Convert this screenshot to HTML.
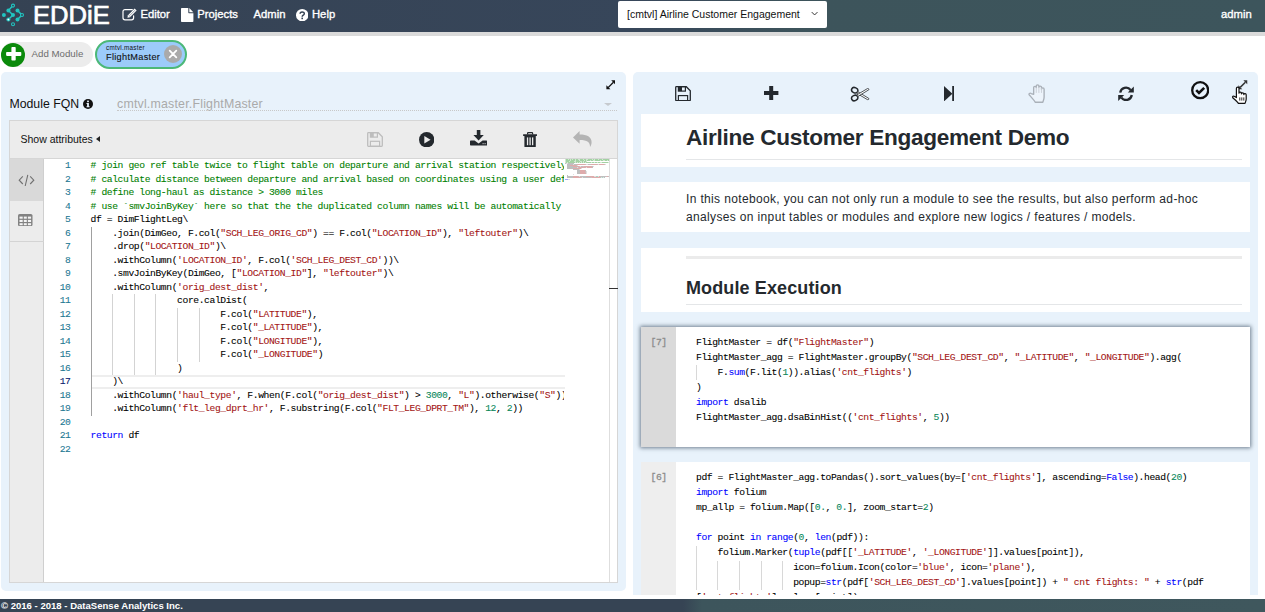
<!DOCTYPE html>
<html lang="en">
<head>
<meta charset="utf-8">
<title>EDDiE</title>
<style>
*{box-sizing:border-box;margin:0;padding:0}
html,body{width:1265px;height:612px;overflow:hidden;background:#fff;font-family:"Liberation Sans",sans-serif;color:#111}
div,span,svg{position:absolute}
span{position:static}
#nav{left:0;top:0;width:1265px;height:32px;background:linear-gradient(90deg,#354253 0%,#37465a 50%,#3d545b 64%,#3d555c 100%);box-shadow:0 4px 0 #dadada}
#nav .brand{left:33px;top:-0.3px;font-size:25.6px;line-height:30px;color:#fff;-webkit-text-stroke:0.7px #fff}
#nav .item{top:0;height:30px;line-height:29px;font-size:11.25px;color:#fff;white-space:nowrap;-webkit-text-stroke:0.35px #fff}
#sel{left:618px;top:1px;width:209px;height:27px;background:#fff;border-radius:2px;font-size:10.5px;line-height:27px;padding-left:9px;color:#111;white-space:nowrap}
#foot{left:0;top:599px;width:1265px;height:13px;background:linear-gradient(90deg,#364454 0%,#364454 54%,#3d555c 55.5%,#3f575d 100%);color:#fff;font-size:9.55px;font-weight:bold;line-height:14px;white-space:nowrap;padding-left:1px}
.panel{background:#e8f2fb;border-radius:5px}
.ln,.cl,.rl{font-family:"Liberation Mono",monospace;font-size:9.7px;white-space:pre;color:#000;height:13.5px;line-height:13.5px;-webkit-text-stroke:0.08px;letter-spacing:-0.416px}
.ln{left:44px;width:26.5px;text-align:right;color:#237893}
.cl{left:90.6px;letter-spacing:-0.4085px}
.rl{left:696px;height:15px;line-height:15px}
.c{color:#008000}.s{color:#a31515}.n{color:#09885a}.k{color:#0000ff}
.ig{width:1px;background:#d3d3d3}
#lclip{left:44px;top:159px;width:520px;height:423px;overflow:hidden}
.cell{left:641px;width:609px;background:#fff}
</style>
</head>
<body>
<div id="nav">
  <div class="brand">EDDiE</div>
  <div class="item" style="left:140.4px">Editor</div>
  <div class="item" style="left:197.3px">Projects</div>
  <div class="item" style="left:253.6px">Admin</div>
  <div class="item" style="left:312px">Help</div>
  <div class="item" style="left:1221px">admin</div>
  <div id="sel">[cmtvl] Airline Customer Engagement</div>
</div>

<!-- module chips -->
<div style="left:1px;top:42px;width:91.5px;height:25px;border-radius:12.5px;background:#ececec;font-size:9.7px;line-height:23.6px;color:#6c6c6c;padding-left:30.6px;white-space:nowrap">Add Module</div>
<div style="left:1px;top:43px;width:24px;height:24px;border-radius:12px;background:#0b8a0b"></div>
<svg style="left:0;top:40px" width="30" height="30" viewBox="0 0 30 30"><rect x="6.1" y="12" width="15.2" height="3.9" rx=".8" fill="#fff"/><rect x="11.4" y="6.9" width="4.3" height="13.7" rx=".8" fill="#fff"/></svg>
<div style="left:95px;top:40px;width:92px;height:29px;border-radius:14.5px;background:#9ccbfa;border:2px solid #4cb878"></div>
<div style="left:106px;top:44.2px;font-size:6.3px;line-height:8px;color:#111;white-space:nowrap;letter-spacing:0.26px">cmtvl.master</div>
<div style="left:106px;top:50.7px;font-size:9.2px;line-height:12px;color:#111;white-space:nowrap;letter-spacing:0.3px;-webkit-text-stroke:0.1px">FlightMaster</div>
<div style="left:164px;top:45px;width:18px;height:18px;border-radius:9px;background:#aaa"></div>
<svg style="left:164px;top:45px" width="18" height="18" viewBox="0 0 18 18"><path d="M5.7 5.7L12.3 12.3M12.3 5.7L5.7 12.3" stroke="#fff" stroke-width="1.8" stroke-linecap="round"/></svg>

<!-- left panel -->
<div class="panel" style="left:1px;top:72px;width:625px;height:519px"></div>
<div style="left:9.4px;top:97px;font-size:12.3px;line-height:14px;color:#111;white-space:nowrap">Module FQN</div>
<div style="left:117px;top:96.5px;font-size:12.4px;line-height:14px;color:#aaa;white-space:nowrap;letter-spacing:0.19px">cmtvl.master.FlightMaster</div>
<div style="left:117px;top:110px;width:500px;height:0;border-top:1px dotted #c8c8c8"></div>
<div style="left:604px;top:103px;width:0;height:0;border-left:4px solid transparent;border-right:4px solid transparent;border-top:3.6px solid #c6cace"></div>

<div style="left:9px;top:120px;width:609px;height:462.5px;background:#ececec;border:1px solid #d6d6d6"></div>
<div style="left:10px;top:158px;width:607px;height:1px;background:#d6d6d6"></div>
<div style="left:20.5px;top:132px;font-size:10.5px;line-height:14px;color:#111;white-space:nowrap">Show attributes</div>
<div style="left:96px;top:135.5px;width:0;height:0;border-top:3.5px solid transparent;border-bottom:3.5px solid transparent;border-right:4px solid #222"></div>

<!-- editor -->
<div style="left:10px;top:159px;width:34px;height:422.5px;background:#ececec;border-right:1px solid #cfcfcf"></div>
<div style="left:10px;top:159px;width:34px;height:41.5px;background:#d9d9d9;border-right:1px solid #cfcfcf"></div>
<div style="left:10px;top:241px;width:34px;height:1px;background:#d4d4d4"></div>
<div style="left:44px;top:159px;width:573px;height:422.5px;background:#fff"></div>
<div style="left:609px;top:159px;width:1px;height:422.5px;background:#dedede"></div>
<div style="left:609px;top:287.5px;width:8.5px;height:1.5px;background:#333"></div>
<!-- current line -->
<div style="left:92px;top:375px;width:473px;height:14px;border-top:2px solid #eee;border-bottom:2px solid #eee"></div>
<svg style="left:565px;top:159px" width="44" height="22" viewBox="0 0 44 22"><rect x="0.0" y="0.00" width="0.5" height="1" fill="#008000" opacity="0.36"/><rect x="1.0" y="0.00" width="2.0" height="1" fill="#008000" opacity="0.36"/><rect x="3.5" y="0.00" width="1.5" height="1" fill="#008000" opacity="0.36"/><rect x="5.5" y="0.00" width="1.5" height="1" fill="#008000" opacity="0.36"/><rect x="7.5" y="0.00" width="2.5" height="1" fill="#008000" opacity="0.36"/><rect x="10.5" y="0.00" width="2.5" height="1" fill="#008000" opacity="0.36"/><rect x="13.5" y="0.00" width="1.0" height="1" fill="#008000" opacity="0.36"/><rect x="15.0" y="0.00" width="3.0" height="1" fill="#008000" opacity="0.36"/><rect x="18.5" y="0.00" width="2.5" height="1" fill="#008000" opacity="0.36"/><rect x="21.5" y="0.00" width="1.0" height="1" fill="#008000" opacity="0.36"/><rect x="23.0" y="0.00" width="4.5" height="1" fill="#008000" opacity="0.36"/><rect x="28.0" y="0.00" width="1.5" height="1" fill="#008000" opacity="0.36"/><rect x="30.0" y="0.00" width="3.5" height="1" fill="#008000" opacity="0.36"/><rect x="34.0" y="0.00" width="3.5" height="1" fill="#008000" opacity="0.36"/><rect x="38.0" y="0.00" width="6.0" height="1" fill="#008000" opacity="0.36"/><rect x="0.0" y="1.00" width="0.5" height="1" fill="#008000" opacity="0.36"/><rect x="1.0" y="1.00" width="4.5" height="1" fill="#008000" opacity="0.36"/><rect x="6.0" y="1.00" width="4.0" height="1" fill="#008000" opacity="0.36"/><rect x="10.5" y="1.00" width="3.5" height="1" fill="#008000" opacity="0.36"/><rect x="14.5" y="1.00" width="4.5" height="1" fill="#008000" opacity="0.36"/><rect x="19.5" y="1.00" width="1.5" height="1" fill="#008000" opacity="0.36"/><rect x="21.5" y="1.00" width="3.5" height="1" fill="#008000" opacity="0.36"/><rect x="25.5" y="1.00" width="2.5" height="1" fill="#008000" opacity="0.36"/><rect x="28.5" y="1.00" width="1.0" height="1" fill="#008000" opacity="0.36"/><rect x="30.0" y="1.00" width="5.5" height="1" fill="#008000" opacity="0.36"/><rect x="36.0" y="1.00" width="2.5" height="1" fill="#008000" opacity="0.36"/><rect x="39.0" y="1.00" width="0.5" height="1" fill="#008000" opacity="0.36"/><rect x="40.0" y="1.00" width="2.0" height="1" fill="#008000" opacity="0.36"/><rect x="42.5" y="1.00" width="1.5" height="1" fill="#008000" opacity="0.36"/><rect x="0.0" y="2.00" width="0.5" height="1" fill="#008000" opacity="0.36"/><rect x="1.0" y="2.00" width="3.0" height="1" fill="#008000" opacity="0.36"/><rect x="4.5" y="2.00" width="4.5" height="1" fill="#008000" opacity="0.36"/><rect x="9.5" y="2.00" width="1.0" height="1" fill="#008000" opacity="0.36"/><rect x="11.0" y="2.00" width="4.0" height="1" fill="#008000" opacity="0.36"/><rect x="15.5" y="2.00" width="0.5" height="1" fill="#008000" opacity="0.36"/><rect x="16.5" y="2.00" width="2.0" height="1" fill="#008000" opacity="0.36"/><rect x="19.0" y="2.00" width="2.5" height="1" fill="#008000" opacity="0.36"/><rect x="0.0" y="3.00" width="0.5" height="1" fill="#008000" opacity="0.36"/><rect x="1.0" y="3.00" width="1.5" height="1" fill="#008000" opacity="0.36"/><rect x="3.0" y="3.00" width="7.0" height="1" fill="#008000" opacity="0.36"/><rect x="10.5" y="3.00" width="2.0" height="1" fill="#008000" opacity="0.36"/><rect x="13.0" y="3.00" width="1.0" height="1" fill="#008000" opacity="0.36"/><rect x="14.5" y="3.00" width="2.0" height="1" fill="#008000" opacity="0.36"/><rect x="17.0" y="3.00" width="1.5" height="1" fill="#008000" opacity="0.36"/><rect x="19.0" y="3.00" width="1.5" height="1" fill="#008000" opacity="0.36"/><rect x="21.0" y="3.00" width="5.0" height="1" fill="#008000" opacity="0.36"/><rect x="26.5" y="3.00" width="3.0" height="1" fill="#008000" opacity="0.36"/><rect x="30.0" y="3.00" width="2.5" height="1" fill="#008000" opacity="0.36"/><rect x="33.0" y="3.00" width="2.0" height="1" fill="#008000" opacity="0.36"/><rect x="35.5" y="3.00" width="1.0" height="1" fill="#008000" opacity="0.36"/><rect x="37.0" y="3.00" width="6.5" height="1" fill="#008000" opacity="0.36"/><rect x="0.0" y="4.00" width="1.0" height="1" fill="#000000" opacity="0.25"/><rect x="1.5" y="4.00" width="0.5" height="1" fill="#000000" opacity="0.25"/><rect x="2.5" y="4.00" width="6.5" height="1" fill="#000000" opacity="0.25"/><rect x="2.0" y="5.00" width="6.5" height="1" fill="#000000" opacity="0.25"/><rect x="9.0" y="5.00" width="3.0" height="1" fill="#000000" opacity="0.25"/><rect x="12.0" y="5.00" width="8.5" height="1" fill="#a31515" opacity="0.36"/><rect x="20.5" y="5.00" width="0.5" height="1" fill="#000000" opacity="0.25"/><rect x="21.5" y="5.00" width="1.0" height="1" fill="#000000" opacity="0.25"/><rect x="23.0" y="5.00" width="3.0" height="1" fill="#000000" opacity="0.25"/><rect x="26.0" y="5.00" width="6.5" height="1" fill="#a31515" opacity="0.36"/><rect x="32.5" y="5.00" width="1.0" height="1" fill="#000000" opacity="0.25"/><rect x="34.0" y="5.00" width="5.5" height="1" fill="#a31515" opacity="0.36"/><rect x="39.5" y="5.00" width="1.0" height="1" fill="#000000" opacity="0.25"/><rect x="2.0" y="6.00" width="3.0" height="1" fill="#000000" opacity="0.25"/><rect x="5.0" y="6.00" width="6.5" height="1" fill="#a31515" opacity="0.36"/><rect x="11.5" y="6.00" width="1.0" height="1" fill="#000000" opacity="0.25"/><rect x="2.0" y="7.00" width="6.0" height="1" fill="#000000" opacity="0.25"/><rect x="8.0" y="7.00" width="6.5" height="1" fill="#a31515" opacity="0.36"/><rect x="14.5" y="7.00" width="0.5" height="1" fill="#000000" opacity="0.25"/><rect x="15.5" y="7.00" width="3.0" height="1" fill="#000000" opacity="0.25"/><rect x="18.5" y="7.00" width="8.5" height="1" fill="#a31515" opacity="0.36"/><rect x="27.0" y="7.00" width="1.5" height="1" fill="#000000" opacity="0.25"/><rect x="2.0" y="8.00" width="10.5" height="1" fill="#000000" opacity="0.25"/><rect x="13.0" y="8.00" width="0.5" height="1" fill="#000000" opacity="0.25"/><rect x="13.5" y="8.00" width="6.5" height="1" fill="#a31515" opacity="0.36"/><rect x="20.0" y="8.00" width="1.0" height="1" fill="#000000" opacity="0.25"/><rect x="21.5" y="8.00" width="5.5" height="1" fill="#a31515" opacity="0.36"/><rect x="27.0" y="8.00" width="1.0" height="1" fill="#000000" opacity="0.25"/><rect x="2.0" y="9.00" width="6.0" height="1" fill="#000000" opacity="0.25"/><rect x="8.0" y="9.00" width="8.0" height="1" fill="#a31515" opacity="0.36"/><rect x="16.0" y="9.00" width="0.5" height="1" fill="#000000" opacity="0.25"/><rect x="8.0" y="10.00" width="6.5" height="1" fill="#000000" opacity="0.25"/><rect x="12.0" y="11.00" width="3.0" height="1" fill="#000000" opacity="0.25"/><rect x="15.0" y="11.00" width="5.0" height="1" fill="#a31515" opacity="0.36"/><rect x="20.0" y="11.00" width="1.0" height="1" fill="#000000" opacity="0.25"/><rect x="12.0" y="12.00" width="3.0" height="1" fill="#000000" opacity="0.25"/><rect x="15.0" y="12.00" width="5.5" height="1" fill="#a31515" opacity="0.36"/><rect x="20.5" y="12.00" width="1.0" height="1" fill="#000000" opacity="0.25"/><rect x="12.0" y="13.00" width="3.0" height="1" fill="#000000" opacity="0.25"/><rect x="15.0" y="13.00" width="5.5" height="1" fill="#a31515" opacity="0.36"/><rect x="20.5" y="13.00" width="1.0" height="1" fill="#000000" opacity="0.25"/><rect x="12.0" y="14.00" width="3.0" height="1" fill="#000000" opacity="0.25"/><rect x="15.0" y="14.00" width="6.0" height="1" fill="#a31515" opacity="0.36"/><rect x="21.0" y="14.00" width="0.5" height="1" fill="#000000" opacity="0.25"/><rect x="8.0" y="15.00" width="0.5" height="1" fill="#000000" opacity="0.25"/><rect x="2.0" y="16.00" width="1.0" height="1" fill="#000000" opacity="0.25"/><rect x="2.0" y="17.00" width="6.0" height="1" fill="#000000" opacity="0.25"/><rect x="8.0" y="17.00" width="5.5" height="1" fill="#a31515" opacity="0.36"/><rect x="13.5" y="17.00" width="0.5" height="1" fill="#000000" opacity="0.25"/><rect x="14.5" y="17.00" width="6.5" height="1" fill="#000000" opacity="0.25"/><rect x="21.0" y="17.00" width="8.0" height="1" fill="#a31515" opacity="0.36"/><rect x="29.0" y="17.00" width="0.5" height="1" fill="#000000" opacity="0.25"/><rect x="30.0" y="17.00" width="0.5" height="1" fill="#000000" opacity="0.25"/><rect x="31.0" y="17.00" width="2.0" height="1" fill="#09885a" opacity="0.36"/><rect x="33.0" y="17.00" width="0.5" height="1" fill="#000000" opacity="0.25"/><rect x="34.0" y="17.00" width="1.5" height="1" fill="#a31515" opacity="0.36"/><rect x="35.5" y="17.00" width="6.0" height="1" fill="#000000" opacity="0.25"/><rect x="41.5" y="17.00" width="1.5" height="1" fill="#a31515" opacity="0.36"/><rect x="43.0" y="17.00" width="1.0" height="1" fill="#000000" opacity="0.25"/><rect x="2.0" y="18.00" width="6.0" height="1" fill="#000000" opacity="0.25"/><rect x="8.0" y="18.00" width="8.5" height="1" fill="#a31515" opacity="0.36"/><rect x="16.5" y="18.00" width="0.5" height="1" fill="#000000" opacity="0.25"/><rect x="17.5" y="18.00" width="9.0" height="1" fill="#000000" opacity="0.25"/><rect x="26.5" y="18.00" width="8.5" height="1" fill="#a31515" opacity="0.36"/><rect x="35.0" y="18.00" width="1.0" height="1" fill="#000000" opacity="0.25"/><rect x="36.5" y="18.00" width="1.0" height="1" fill="#09885a" opacity="0.36"/><rect x="37.5" y="18.00" width="0.5" height="1" fill="#000000" opacity="0.25"/><rect x="38.5" y="18.00" width="0.5" height="1" fill="#09885a" opacity="0.36"/><rect x="39.0" y="18.00" width="1.0" height="1" fill="#000000" opacity="0.25"/><rect x="0.0" y="20.00" width="3.0" height="1" fill="#0000ff" opacity="0.36"/><rect x="3.5" y="20.00" width="1.0" height="1" fill="#000000" opacity="0.25"/></svg>
<div id="lclip"><div style="left:-44px;top:-159px">
<div class="ig" style="background:#a0a0a0;left:90.6px;top:226.95px;height:189.00px"></div><div class="ig" style="left:112.2px;top:294.45px;height:81.00px"></div><div class="ig" style="left:133.8px;top:294.45px;height:81.00px"></div><div class="ig" style="left:155.4px;top:294.45px;height:81.00px"></div><div class="ig" style="left:177.0px;top:307.95px;height:54.00px"></div><div class="ig" style="left:198.6px;top:307.95px;height:54.00px"></div>
<div class="ln" style="top:159.45px">1</div><div class="cl" style="top:159.45px"><span class="c"># join geo ref table twice to flight table on departure and arrival station respectively</span></div>
<div class="ln" style="top:172.95px">2</div><div class="cl" style="top:172.95px"><span class="c"># calculate distance between departure and arrival based on coordinates using a user def</span></div>
<div class="ln" style="top:186.45px">3</div><div class="cl" style="top:186.45px"><span class="c"># define long-haul as distance &gt; 3000 miles</span></div>
<div class="ln" style="top:199.95px">4</div><div class="cl" style="top:199.95px"><span class="c"># use `smvJoinByKey` here so that the the duplicated column names will be automatically</span></div>
<div class="ln" style="top:213.45px">5</div><div class="cl" style="top:213.45px">df = DimFlightLeg\</div>
<div class="ln" style="top:226.95px">6</div><div class="cl" style="top:226.95px">    .join(DimGeo, F.col(<span class="s">"SCH_LEG_ORIG_CD"</span>) == F.col(<span class="s">"LOCATION_ID"</span>), <span class="s">"leftouter"</span>)\</div>
<div class="ln" style="top:240.45px">7</div><div class="cl" style="top:240.45px">    .drop(<span class="s">"LOCATION_ID"</span>)\</div>
<div class="ln" style="top:253.95px">8</div><div class="cl" style="top:253.95px">    .withColumn(<span class="s">'LOCATION_ID'</span>, F.col(<span class="s">'SCH_LEG_DEST_CD'</span>))\</div>
<div class="ln" style="top:267.45px">9</div><div class="cl" style="top:267.45px">    .smvJoinByKey(DimGeo, [<span class="s">"LOCATION_ID"</span>], <span class="s">"leftouter"</span>)\</div>
<div class="ln" style="top:280.95px">10</div><div class="cl" style="top:280.95px">    .withColumn(<span class="s">'orig_dest_dist'</span>,</div>
<div class="ln" style="top:294.45px">11</div><div class="cl" style="top:294.45px">                core.calDist(</div>
<div class="ln" style="top:307.95px">12</div><div class="cl" style="top:307.95px">                        F.col(<span class="s">"LATITUDE"</span>),</div>
<div class="ln" style="top:321.45px">13</div><div class="cl" style="top:321.45px">                        F.col(<span class="s">"_LATITUDE"</span>),</div>
<div class="ln" style="top:334.95px">14</div><div class="cl" style="top:334.95px">                        F.col(<span class="s">"LONGITUDE"</span>),</div>
<div class="ln" style="top:348.45px">15</div><div class="cl" style="top:348.45px">                        F.col(<span class="s">"_LONGITUDE"</span>)</div>
<div class="ln" style="top:361.95px">16</div><div class="cl" style="top:361.95px">                )</div>
<div class="ln" style="top:375.45px;color:#0b216f">17</div><div class="cl" style="top:375.45px">    )\</div>
<div class="ln" style="top:388.95px">18</div><div class="cl" style="top:388.95px">    .withColumn(<span class="s">'haul_type'</span>, F.when(F.col(<span class="s">"orig_dest_dist"</span>) &gt; <span class="n">3000</span>, <span class="s">"L"</span>).otherwise(<span class="s">"S"</span>))</div>
<div class="ln" style="top:402.45px">19</div><div class="cl" style="top:402.45px">    .withColumn(<span class="s">'flt_leg_dprt_hr'</span>, F.substring(F.col(<span class="s">"FLT_LEG_DPRT_TM"</span>), <span class="n">12</span>, <span class="n">2</span>))</div>
<div class="ln" style="top:415.95px">20</div><div class="cl" style="top:415.95px"></div>
<div class="ln" style="top:429.45px">21</div><div class="cl" style="top:429.45px"><span class="k">return</span> df</div>
<div class="ln" style="top:442.95px">22</div><div class="cl" style="top:442.95px"></div>

</div></div>

<!-- logo -->
<svg style="left:0;top:0" width="30" height="32" viewBox="0 0 30 32">
<g stroke="#21c4c0" stroke-width="1.5" fill="none" stroke-linecap="round" stroke-linejoin="round">
<path d="M13 5.6L8.4 10.5L13 15L8.4 19.5"/><path d="M17.5 10.5L22 15L17.5 19.5"/></g>
<g fill="#21c4c0">
<circle cx="8.4" cy="10.5" r="2"/><circle cx="3.9" cy="15" r="2"/><circle cx="13" cy="15" r="2"/><circle cx="17.5" cy="10.5" r="2"/><circle cx="17.5" cy="19.5" r="2"/></g>
<g fill="#364454" stroke="#21c4c0" stroke-width="1.1">
<circle cx="13" cy="5.6" r="1.5"/><circle cx="22" cy="15" r="1.5"/><circle cx="13" cy="24.2" r="1.5"/></g>
<circle cx="8.4" cy="19.5" r="1.5" fill="#fff" stroke="#21c4c0" stroke-width="1.1"/>
</svg>
<!-- edit icon -->
<svg style="left:121px;top:7px" width="17" height="15" viewBox="0 0 17 15">
<path d="M11.3 2.6H4A2 2 0 0 0 2 4.6V10.8A2 2 0 0 0 4 12.8H10.6A2 2 0 0 0 12.6 10.8V8.8" fill="none" stroke="#fff" stroke-width="1.2" stroke-linecap="round"/>
<path d="M13.6 1.6L15.6 3.6L9 10.2L6.4 10.8L7 8.2Z" fill="#fff"/>
<path d="M8 8.6L9 9.6" stroke="#364454" stroke-width=".6"/><path d="M8.6 8.6L14 3.2" stroke="#364454" stroke-width=".5"/>
</svg>
<!-- file icon -->
<svg style="left:181px;top:8px" width="13" height="14" viewBox="0 0 13 14">
<path d="M.8 0H7.3V4.6A.6.6 0 0 0 7.9 5.2H12.4V13.2A.8.8 0 0 1 11.6 14H.8A.8.8 0 0 1 0 13.2V.8A.8.8 0 0 1 .8 0Z" fill="#fff"/>
<path d="M8.3 0.1L12.3 4.2H8.3Z" fill="#fff"/>
</svg>
<!-- help icon -->
<svg style="left:295.8px;top:8.7px" width="12.4" height="12.4" viewBox="0 0 12.4 12.4">
<circle cx="6.2" cy="6.2" r="6.2" fill="#fff"/>
<path d="M4.1 4.8C4.1 2.3 8.3 2.3 8.3 4.7C8.3 6.2 6.2 6.2 6.2 7.7" fill="none" stroke="#364454" stroke-width="1.5"/>
<rect x="5.4" y="8.6" width="1.6" height="1.6" fill="#364454"/>
</svg>
<!-- select chevron -->
<svg style="left:811.3px;top:11.3px" width="7.2" height="5.4" viewBox="0 0 8 6"><path d="M.8 1.2L4 4.4L7.2 1.2" fill="none" stroke="#333" stroke-width="1.1"/></svg>
<!-- info icon -->
<svg style="left:83px;top:98.8px" width="10" height="10" viewBox="0 0 10 10"><circle cx="5" cy="5" r="5" fill="#111"/><rect x="4.1" y="1.6" width="1.8" height="1.6" fill="#e8f2fb"/><path d="M3.5 4.1H5.9V7.3H6.6V8.3H3.5V7.3H4.1V5.1H3.5Z" fill="#e8f2fb"/></svg>
<!-- expand (left) -->
<svg style="left:605.8px;top:80.4px" width="9.7" height="9.7" viewBox="0 0 10.4 10.4"><path d="M2.4 8L8 2.4" stroke="#111" stroke-width="1.3"/><path d="M5.6 0.4H10V4.8Z" fill="#111"/><path d="M0.4 5.6V10H4.8Z" fill="#111"/></svg>
<!-- left toolbar: save disabled -->
<svg style="left:367px;top:132px" width="16" height="15" viewBox="0 0 16 15">
<path d="M.7 1.4A.7.7 0 0 1 1.4.7H11.3L15.3 4.7V13.6A.7.7 0 0 1 14.6 14.3H1.4A.7.7 0 0 1 .7 13.6Z" fill="none" stroke="#bdbdbd" stroke-width="1.3"/>
<rect x="3.4" y=".7" width="7" height="4.4" fill="none" stroke="#bdbdbd" stroke-width="1.2"/><rect x="3.4" y=".7" width="3.4" height="4.4" fill="#bdbdbd"/>
<rect x="3.4" y="9.3" width="9.2" height="5" fill="none" stroke="#bdbdbd" stroke-width="1.2"/>
</svg>
<!-- play -->
<svg style="left:418.8px;top:131.7px" width="15.4" height="15.4" viewBox="0 0 15.4 15.4"><circle cx="7.7" cy="7.7" r="7.7" fill="#24292e"/><path d="M5.3 3.9L11.6 7.7L5.3 11.5Z" fill="#ececec"/></svg>
<!-- download -->
<svg style="left:469.8px;top:130.3px" width="17.2" height="15.6" viewBox="0 0 17.2 15.6">
<path d="M6.8 0H10.4V5H13.8L8.6 10.4L3.4 5H6.8Z" fill="#24292e"/>
<path d="M.8 10.6H4.6L8.6 13.6L12.6 10.6H16.4A.8.8 0 0 1 17.2 11.4V14.8A.8.8 0 0 1 16.4 15.6H.8A.8.8 0 0 1 0 14.8V11.4A.8.8 0 0 1 .8 10.6Z" fill="#24292e"/>
<rect x="12.6" y="13.2" width="1" height="1" fill="#ececec"/><rect x="14.6" y="13.2" width="1" height="1" fill="#ececec"/>
</svg>
<!-- trash -->
<svg style="left:523px;top:131.6px" width="14.2" height="15.6" viewBox="0 0 14.2 15.6">
<path d="M4.6 2.4V1.2A.6.6 0 0 1 5.2.6H9A.6.6 0 0 1 9.600 1.200V2.400" fill="none" stroke="#24292e" stroke-width="1.2"/>
<rect x="0" y="2.2" width="14.2" height="1.7" rx=".6" fill="#24292e"/>
<path d="M1.400 3.600H12.800V14.200A1.400 1.400 0 0 1 11.400 15.600H2.800A1.400 1.400 0 0 1 1.400 14.200Z" fill="#24292e"/>
<rect x="3.9" y="5.400" width="1.300" height="7.800" fill="#ececec"/><rect x="6.450" y="5.400" width="1.300" height="7.800" fill="#ececec"/><rect x="9" y="5.400" width="1.300" height="7.800" fill="#ececec"/>
</svg>
<!-- reply disabled -->
<svg style="left:572.600px;top:131px" width="19" height="16" viewBox="0 0 19 16">
<path d="M6.600 0V3.600C14 3.600 18.600 6 18.600 11.200C18.600 13 18 14.800 17 16C17.300 11.400 14.400 9 6.600 9V12.800L0 6.400Z" fill="#b4b4b4"/></svg>
<!-- side tabs: code icon -->
<svg style="left:18px;top:173.500px" width="17" height="13" viewBox="0 0 17 13"><path d="M4.800 2.400L1.200 6.200L4.800 10M12.200 2.400L15.800 6.200L12.200 10M9.800 .8L7.200 12" fill="none" stroke="#707070" stroke-width="1.100"/></svg>
<!-- table icon -->
<svg style="left:18.200px;top:213.800px" width="14.500" height="12.200" viewBox="0 0 14.500 12.200"><rect x="0" y="0" width="14.500" height="12.200" rx="1.600" fill="#828282"/>
<g fill="#f4f4f4"><rect x="1.500" y="2.600" width="3.200" height="2.100"/><rect x="5.800" y="2.600" width="3" height="2.100"/><rect x="9.900" y="2.600" width="3.200" height="2.100"/><rect x="1.500" y="5.900" width="3.200" height="2.100"/><rect x="5.800" y="5.900" width="3" height="2.100"/><rect x="9.900" y="5.900" width="3.200" height="2.100"/><rect x="1.500" y="9.200" width="3.200" height="2"/><rect x="5.800" y="9.200" width="3" height="2"/><rect x="9.900" y="9.200" width="3.200" height="2"/></g></svg>

<!-- right panel -->
<div style="left:633px;top:72px;width:632px;height:523px;overflow:hidden">
<div style="left:-633px;top:-72px">
<div class="panel" style="left:633px;top:72px;width:625px;height:540px"></div>
<!-- right toolbar: save -->
<svg style="left:675px;top:85.800px" width="16" height="15.400" viewBox="0 0 16 15.400">
<path d="M.7 1.400A.7.7 0 0 1 1.400.7H11.300L15.300 4.700V14A.7.7 0 0 1 14.600 14.700H1.400A.7.7 0 0 1 .7 14Z" fill="none" stroke="#24292e" stroke-width="1.300"/>
<rect x="3.400" y=".7" width="7" height="4.400" fill="none" stroke="#24292e" stroke-width="1.200"/><rect x="3.400" y=".7" width="3.600" height="4.400" fill="#24292e"/>
<rect x="3.400" y="9.600" width="9.200" height="5" fill="none" stroke="#24292e" stroke-width="1.200"/>
</svg>
<!-- plus -->
<svg style="left:764.400px;top:86px" width="14.400" height="14" viewBox="0 0 14.400 14"><path d="M5.200 0H9.200V5H14.400V9H9.200V14H5.200V9H0V5H5.200Z" fill="#24292e"/></svg>
<!-- scissors -->
<svg style="left:850px;top:86px" width="20" height="16" viewBox="0 0 20 16">
<ellipse cx="4.700" cy="4.200" rx="3.200" ry="2.600" transform="rotate(25 4.700 4.200)" fill="none" stroke="#24292e" stroke-width="1.500"/>
<ellipse cx="4.700" cy="12" rx="3.200" ry="2.600" transform="rotate(-25 4.700 12)" fill="none" stroke="#24292e" stroke-width="1.500"/>
<path d="M7.600 5.600L18.800 12.400C19.200 13.400 18.400 13.800 17.400 13.600L7 7.400Z" fill="#fff" stroke="#24292e" stroke-width=".8" stroke-linejoin="round"/>
<path d="M7.600 10.600L18.800 3.800C19.200 2.800 18.400 2.400 17.400 2.600L7 8.800Z" fill="#fff" stroke="#24292e" stroke-width=".8" stroke-linejoin="round"/>
</svg>
<!-- step forward -->
<svg style="left:943.600px;top:85.800px" width="10.600" height="15.400" viewBox="0 0 10.600 15.400"><path d="M0 0L8.400 7.700L0 15.400Z" fill="#24292e"/><rect x="8.200" y="0" width="2.400" height="15.400" fill="#24292e"/></svg>
<!-- hand disabled -->
<svg style="left:1027.800px;top:84px" width="19.600" height="19.700" viewBox="0 0 18 19" preserveAspectRatio="none">
<path d="M5.200 10V3.400A1.200 1.200 0 0 1 7.600 3.400V2A1.200 1.200 0 0 1 10 2V3.200A1.200 1.200 0 0 1 12.400 3.200V5A1.200 1.200 0 0 1 14.800 5V12.600C14.800 15 14 16.200 13.600 17.600H6.600C5.800 16 3 12.800 1.200 10.600C.4 9.400 1.800 8.200 3 9.200Z" fill="#edf4fb" stroke="#aab1b9" stroke-width="1.250" stroke-linejoin="round"/>
<path d="M7.600 3.400V8.600M10 3V8.600M12.400 4V8.600" stroke="#c8ced4" stroke-width=".8" fill="none"/>
</svg>
<!-- refresh -->
<svg style="left:1118.300px;top:85.600px" width="16" height="15.600" viewBox="0 0 16 15.600">
<path d="M2.200 6.600A5.800 5.800 0 0 1 12.600 4" fill="none" stroke="#24292e" stroke-width="2.300"/>
<path d="M13.800 9A5.800 5.800 0 0 1 3.400 11.600" fill="none" stroke="#24292e" stroke-width="2.300"/>
<path d="M15.800 .6V6.600H9.800Z" fill="#24292e"/><path d="M.2 15V9H6.200Z" fill="#24292e"/>
</svg>
<!-- check circle -->
<svg style="left:1191px;top:81.300px" width="18.400" height="18.400" viewBox="0 0 18.400 18.400"><circle cx="9.200" cy="9.200" r="8" fill="none" stroke="#111" stroke-width="2.300"/><path d="M5.200 9.200L8 12L13.200 6.800" fill="none" stroke="#111" stroke-width="2.600"/></svg>
<!-- expand (right) -->
<svg style="left:1238px;top:80.400px" width="9.600" height="9.600" viewBox="0 0 10.400 10.400"><path d="M2.400 8L8 2.400" stroke="#333" stroke-width="1.600"/><path d="M5.800 0.400H10V4.600Z" fill="#333"/><path d="M0.400 5.800V10H4.600Z" fill="#333"/></svg>
<!-- cursor hand -->
<svg style="left:1231px;top:86px" width="18" height="19" viewBox="0 0 18 19">
<path d="M5.400 11.600V2.400A1.300 1.300 0 0 1 8 2.400V7.200A1.200 1.200 0 0 1 10.400 7.400V7.800A1.200 1.200 0 0 1 12.800 8.200V8.600A1.200 1.200 0 0 1 15.200 9V13C15.200 15 14.400 16 14 17.400H7.400C6.600 15.800 3.600 13.400 1.800 11.800C1 10.600 2.400 9.600 3.600 10.400Z" fill="#fff" stroke="#111" stroke-width="1.200" stroke-linejoin="round"/>
<path d="M8.800 11.400V14.600M10.800 11.400V14.600M12.800 11.400V14.600" stroke="#111" stroke-width=".9" fill="none"/>
</svg>

<div class="cell" style="top:114px;height:53px"></div>
<div style="left:686px;top:123px;font-size:22.6px;line-height:30px;font-weight:bold;color:#24292e;white-space:nowrap;letter-spacing:-0.3px">Airline Customer Engagement Demo</div>
<div style="left:686px;top:158.5px;width:556px;height:1px;background:#e4e6e8"></div>
<div class="cell" style="top:182px;height:50.4px"></div>
<div style="left:686px;top:190px;font-size:12px;line-height:18px;color:#24292e;white-space:nowrap;letter-spacing:0.35px">In this notebook, you can not only run a module to see the results, but also perform ad-hoc<br>analyses on input tables or modules and explore new logics / features / models.</div>
<div class="cell" style="top:248px;height:64px"></div>
<div style="left:686px;top:256.5px;width:556px;height:3px;background:#ebebeb;margin-top:-0.5px"></div>
<div style="left:686px;top:276px;font-size:18px;line-height:24px;font-weight:bold;color:#24292e;white-space:nowrap;letter-spacing:0.12px">Module Execution</div>
<div style="left:686px;top:304px;width:556px;height:1px;background:#e4e6e8"></div>

<div class="cell" style="top:327px;height:119.5px;box-shadow:0 0 4px 1px rgba(30,50,70,.6)"></div>
<div style="left:641px;top:327px;width:35px;height:119.5px;background:#dadada"></div>
<div class="rl" style="left:650.5px;top:335.25px;color:#8c8c8c;-webkit-text-stroke:0.3px">[7]</div>
<div class="rl" style="top:335.25px">FlightMaster = df(<span class="s">"FlightMaster"</span>)</div>
<div class="rl" style="top:350.25px">FlightMaster_agg = FlightMaster.groupBy(<span class="s">"SCH_LEG_DEST_CD"</span>, <span class="s">"_LATITUDE"</span>, <span class="s">"_LONGITUDE"</span>).agg(</div>
<div class="rl" style="top:365.25px">    F.<span class="k">sum</span>(F.lit(<span class="n">1</span>)).alias(<span class="s">'cnt_flights'</span>)</div>
<div class="rl" style="top:380.25px">)</div>
<div class="rl" style="top:395.25px"><span class="k">import</span> dsalib</div>
<div class="rl" style="top:410.25px">FlightMaster_agg.dsaBinHist((<span class="s">'cnt_flights'</span>, <span class="n">5</span>))</div>

<div class="cell" style="top:461.5px;height:160px"></div>
<div style="left:641px;top:461.5px;width:35px;height:160px;background:#eee"></div>
<div class="rl" style="left:650.5px;top:470.25px;color:#8c8c8c;-webkit-text-stroke:0.3px">[6]</div>
<div class="ig" style="left:695.8px;top:545.5px;height:44px;background:#d8d8d8"></div>
<div class="ig" style="left:717.2px;top:560.5px;height:29px;background:#d8d8d8"></div>
<div class="ig" style="left:739px;top:560.5px;height:29px;background:#d8d8d8"></div>
<div class="ig" style="left:761px;top:560.5px;height:29px;background:#d8d8d8"></div>
<div class="ig" style="left:782.3px;top:560.5px;height:29px;background:#d8d8d8"></div>
<div class="ig" style="left:695.8px;top:364.8px;height:15px;background:#d8d8d8"></div>
<div class="rl" style="top:470.25px">pdf = FlightMaster_agg.toPandas().sort_values(by=[<span class="s">'cnt_flights'</span>], ascending=<span class="k">False</span>).head(<span class="n">20</span>)</div>
<div class="rl" style="top:485.25px"><span class="k">import</span> folium</div>
<div class="rl" style="top:500.25px">mp_allp = folium.Map([<span class="n">0.</span>, <span class="n">0.</span>], zoom_start=<span class="n">2</span>)</div>
<div class="rl" style="top:515.25px"></div>
<div class="rl" style="top:530.25px"><span class="k">for</span> point <span class="k">in</span> <span class="k">range</span>(<span class="n">0</span>, <span class="k">len</span>(pdf)):</div>
<div class="rl" style="top:545.25px">    folium.Marker(<span class="k">tuple</span>(pdf[[<span class="s">'_LATITUDE'</span>, <span class="s">'_LONGITUDE'</span>]].values[point]),</div>
<div class="rl" style="top:560.25px">                  icon=folium.Icon(color=<span class="s">'blue'</span>, icon=<span class="s">'plane'</span>),</div>
<div class="rl" style="top:575.25px">                  popup=<span class="k">str</span>(pdf[<span class="s">'SCH_LEG_DEST_CD'</span>].values[point]) + <span class="s">" cnt flights: "</span> + <span class="k">str</span>(pdf</div>
<div class="rl" style="top:590.25px">[<span class="s">'cnt_flights'</span>].values[point])</div>

</div></div>

<div id="foot">© 2016 - 2018 - DataSense Analytics Inc.</div>
</body>
</html>
